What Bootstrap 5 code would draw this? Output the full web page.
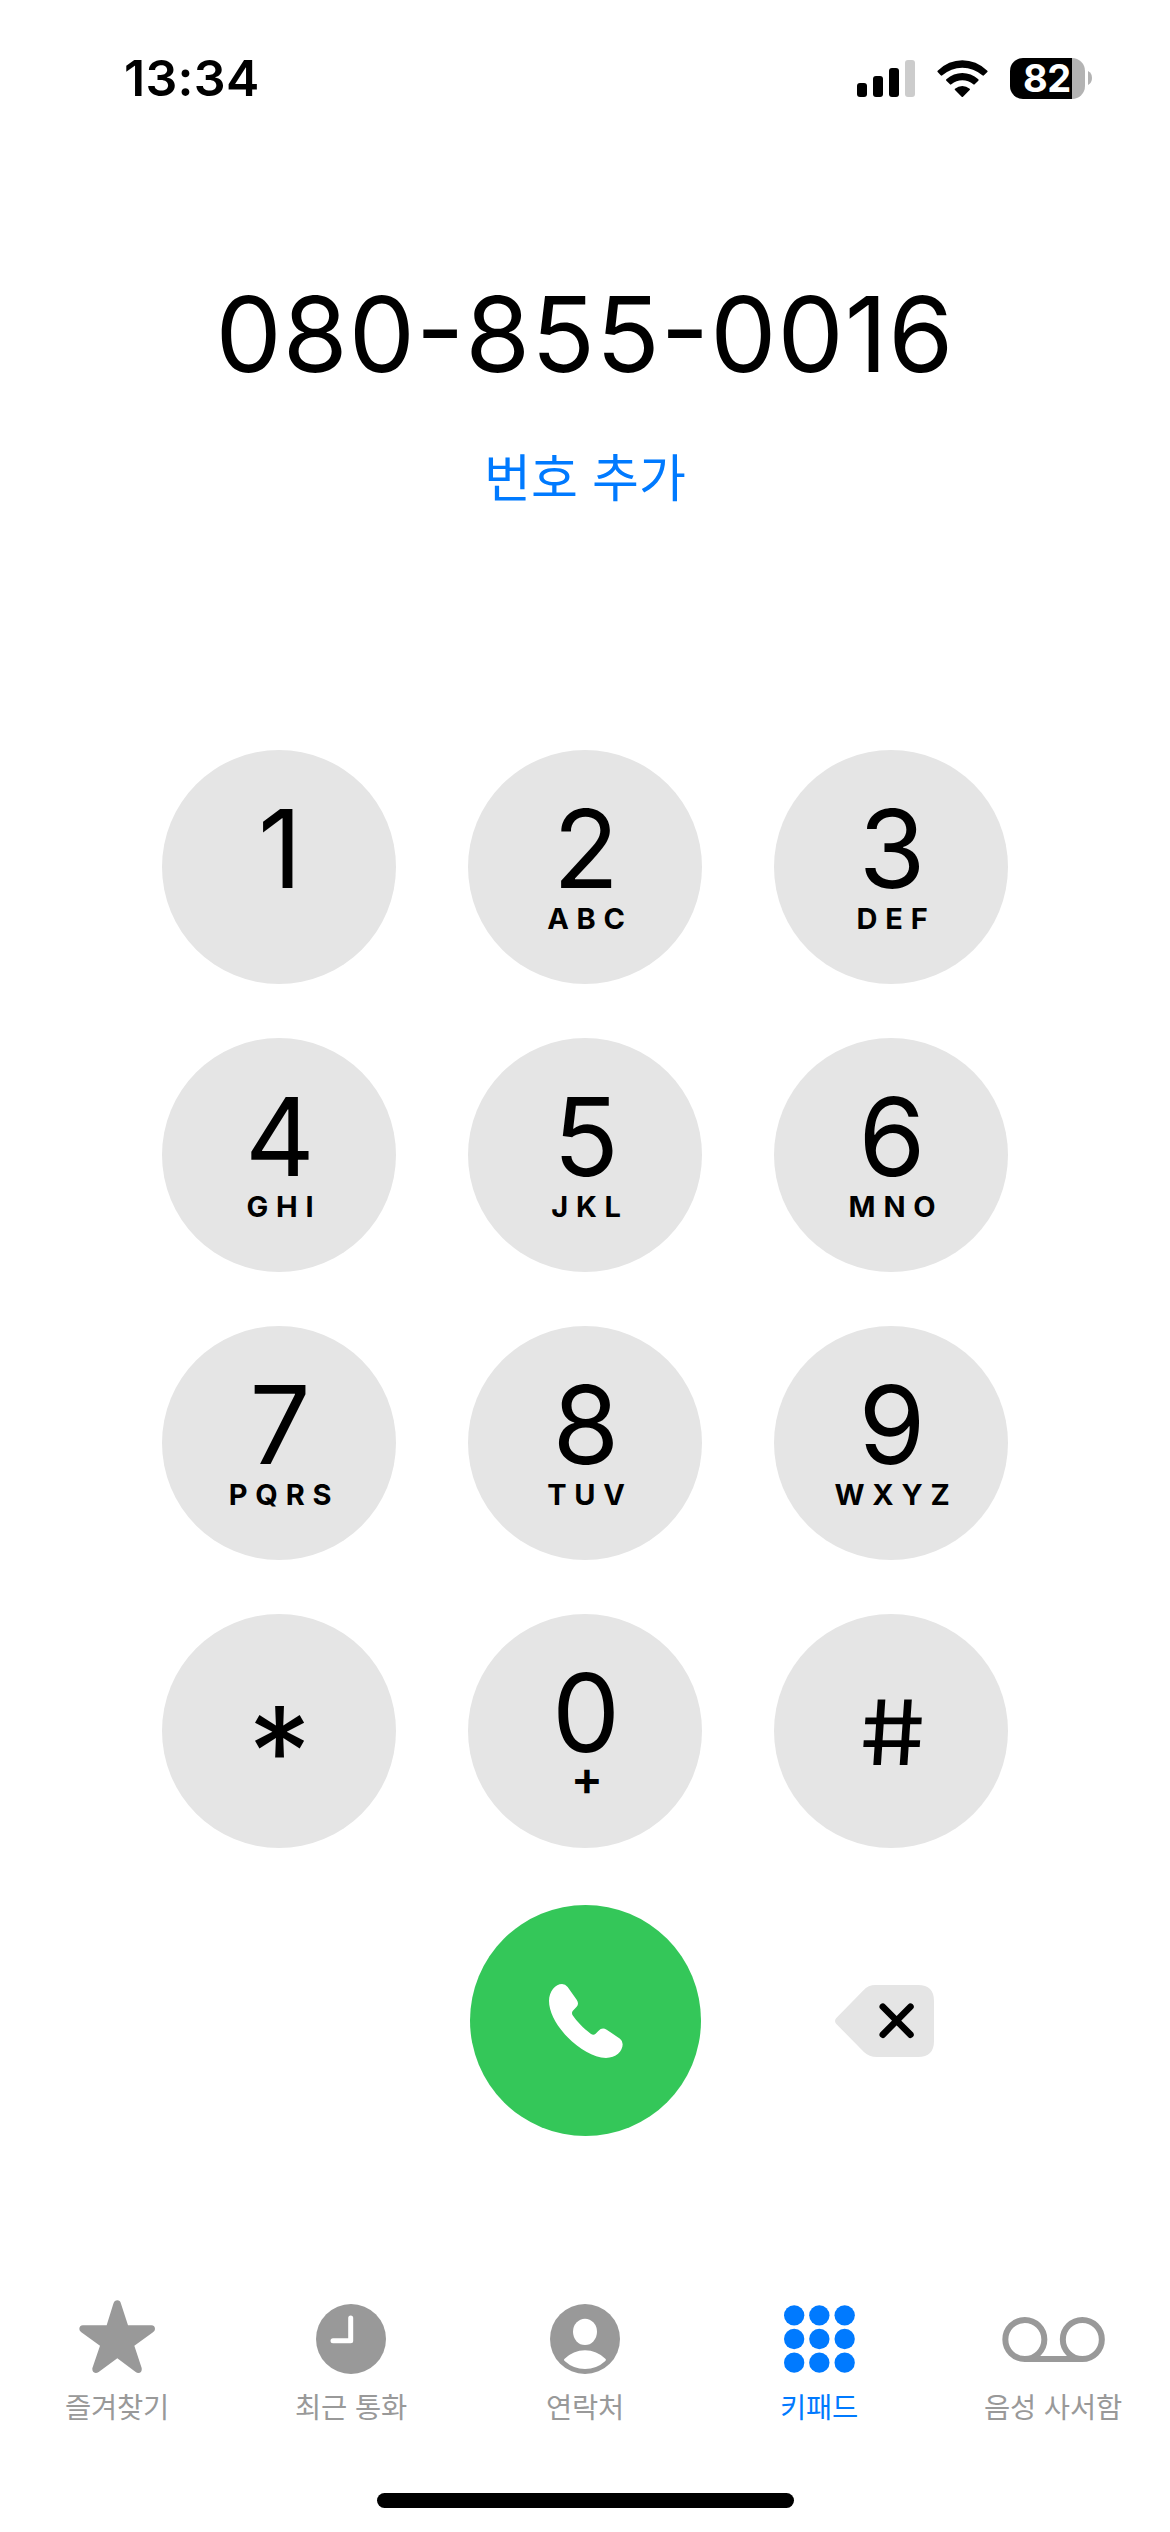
<!DOCTYPE html>
<html lang="ko">
<head>
<meta charset="utf-8">
<meta name="viewport" content="width=device-width, initial-scale=1">
<title>키패드</title>
<link href="https://cdn.jsdelivr.net/npm/bootstrap@5.3.0/dist/css/bootstrap.min.css" rel="stylesheet">
<style>
  body { background: #fff; color: #000; font-family: Inter, "Noto Sans CJK KR", sans-serif; }
  svg { display: block; flex: none; }
  button { border: 0; padding: 0; background: none; color: inherit; }
  .phone { width: 1170px; height: 2532px; overflow: hidden; }
  .status-bar { height: 156px; padding: 0 78px 0 124px; }
  .clock-text { font-size: 50px; font-weight: 600; line-height: 156px; letter-spacing: .3px; }
  .status-icons { gap: 22px; }
  .battery { width: 75px; height: 41px; border-radius: 13px; background: linear-gradient(90deg, #000 62px, #b3b3b3 62px); color: #fff; font-size: 38px; font-weight: 700; line-height: 41px; padding-left: 13px; letter-spacing: -.5px; }
  .dialed { height: 594px; padding-top: 118px; }
  .dialed-number { font-size: 105px; line-height: 120px; letter-spacing: 1px; font-feature-settings: "case"; }
  .add-number { font-family: "Noto Sans CJK KR", sans-serif; font-size: 51px; line-height: 74px; color: #007aff; margin-top: 44px; }
  .keypad { display: grid; grid-template-columns: repeat(3, 234px); grid-auto-rows: 234px; gap: 54px 72px; }
  .key { background: #e5e5e5; border-radius: 50%; padding-top: 45px; }
  .key-digit { font-size: 108px; line-height: 108px; margin-right: -2px; }
  .key-letters { font-size: 29px; line-height: 30px; font-weight: 700; letter-spacing: 7.8px; margin: 1px -10px 0 0; }
  .key-star { font-size: 126px; line-height: 186px; margin-right: -1px; }
  .key-hash { font-size: 90px; line-height: 147px; transform: scaleX(1.15) skewX(6deg); margin-right: -3px; }
  .key-plus { font-size: 48px; line-height: 40px; font-weight: 600; margin: -9px 0 0 4px; }
  .call-btn { width: 231px; height: 231px; margin-top: 3px; }
  .delete-btn { padding: 4px 0 0 61px; }
  .tab-bar { height: 199px; }
  .tab-item { width: 234px; color: #999; font-family: "Noto Sans CJK KR", sans-serif; font-size: 28.500px; line-height: 43px; letter-spacing: -.2px; }
  .tab-item.active { color: #007aff; }
  .tab-icon { height: 90px; }
  .star-icon { margin-bottom: 5px; }
  .home-bar { width: 417px; height: 15px; border-radius: 8px; background: #000; }
</style>
<script src="https://cdn.jsdelivr.net/npm/bootstrap@5.3.0/dist/js/bootstrap.bundle.min.js"></script>
</head>
<body>
<div class="phone d-flex flex-column align-items-center">
  <header class="status-bar w-100 d-flex align-items-center justify-content-between">
    <div class="clock-text">13:34</div>
    <div class="status-icons d-flex align-items-center">
      <svg width="58" height="37" viewBox="0 0 58 37"><rect y="23" width="10" height="14" rx="3"/><rect x="16" y="16" width="10" height="21" rx="3"/><rect x="32" y="8" width="10" height="29" rx="3"/><rect x="48" width="10" height="37" rx="3" fill="#ccc"/></svg>
      <svg width="51" height="37" viewBox="318 56 153 111"><path d="M320 88Q353 57 394 57T469 88Q471 90 469 92L459 102Q457 104 454 102Q428 79 394 79T334 102Q332 104 329 102L320 92Q318 90 320 88Z"/><path d="M346 114Q368 95 394 95T442 114Q444 116 442 118L431 129Q429 131 427 129Q412 117 394 117T361 129Q359 131 357 129L346 118Q344 116 346 114Z"/><path d="M372 142Q382 134 394 134T416 142Q418 144 416 146L396 166Q394 168 392 166L372 146Q370 144 372 142Z"/></svg>
      <div class="d-flex align-items-center">
        <div class="battery">82</div>
        <svg width="7" height="14" viewBox="0 0 7 14"><path d="M3 0Q7 2 7 7T3 14Z" fill="#b3b3b3"/></svg>
      </div>
    </div>
  </header>

  <section class="dialed d-flex flex-column align-items-center">
    <div class="dialed-number">080-855-0016</div>
    <button class="add-number">번호 추가</button>
  </section>

  <main class="keypad text-center">
    <div class="key"><div class="key-digit">1</div></div>
    <div class="key"><div class="key-digit">2</div><div class="key-letters">ABC</div></div>
    <div class="key"><div class="key-digit">3</div><div class="key-letters">DEF</div></div>
    <div class="key"><div class="key-digit">4</div><div class="key-letters">GHI</div></div>
    <div class="key"><div class="key-digit">5</div><div class="key-letters">JKL</div></div>
    <div class="key"><div class="key-digit">6</div><div class="key-letters">MNO</div></div>
    <div class="key"><div class="key-digit">7</div><div class="key-letters">PQRS</div></div>
    <div class="key"><div class="key-digit">8</div><div class="key-letters">TUV</div></div>
    <div class="key"><div class="key-digit">9</div><div class="key-letters">WXYZ</div></div>
    <div class="key"><div class="key-star">*</div></div>
    <div class="key"><div class="key-digit">0</div><div class="key-plus">+</div></div>
    <div class="key"><div class="key-hash">#</div></div>
    <div></div>
    <button class="call-btn mx-auto rounded-circle" aria-label="통화">
      <svg width="231" height="231" viewBox="30 45 693 693"><circle cx="376.500" cy="391.500" r="346.500" fill="#34c759"/><path fill="#fff" d="M267 333C267 304 287 282 306 282Q316 282 323 291L350 329Q358 341 350 350L338 363Q334 368 338 376C350 394 371 416 392 431Q400 437 406 432L415 423Q426 411 440 419L480 446Q488 452 488 463C488 484 468 504 438 504C400 504 357 476 323 442C289 407 267 366 267 333Z"/></svg>
    </button>
    <button class="delete-btn d-flex align-items-center" aria-label="삭제">
      <svg width="99" height="72" viewBox="1124 285 298 216"><path fill="#e5e5e5" d="M1128 384L1209 301Q1224 285 1246 285H1374Q1422 285 1422 333V453Q1422 501 1374 501H1250Q1227 501 1211 486L1128 402Q1120 393 1128 384Z"/><path d="M1268 350L1351 434M1351 350L1268 434" stroke="#000" stroke-width="20" stroke-linecap="round"/></svg>
    </button>
  </main>

  <nav class="tab-bar w-100 d-flex mt-auto text-center">
    <div class="tab-item"><div class="tab-icon d-flex align-items-center justify-content-center">
      <svg class="star-icon" width="76" height="73" viewBox="114 59 228 219"><path fill="#999" d="M217 70Q221 60 229 60T240 70L261 135H331Q342 136 342 146Q342 151 336 156L280 196L302 263Q304 277 292 278Q288 278 284 275L229 234L173 275Q169 278 164 278Q153 276 154 264L177 196L121 156Q115 151 115 146Q115 136 126 135H197Z"/></svg>
    </div>즐겨찾기</div>
    <div class="tab-item"><div class="tab-icon d-flex align-items-center justify-content-center">
      <svg width="70" height="70" viewBox="0 0 70 70"><circle cx="35" cy="35" r="35" fill="#999"/><path d="M34.700 14V36.700H17" fill="none" stroke="#fff" stroke-width="5" stroke-linecap="round" stroke-linejoin="round"/></svg>
    </div>최근 통화</div>
    <div class="tab-item"><div class="tab-icon d-flex align-items-center justify-content-center">
      <svg width="70" height="70" viewBox="150 72 210 210"><circle cx="255" cy="177" r="105" fill="#999"/><ellipse cx="255" cy="155.500" rx="36" ry="39.500" fill="#fff"/><path fill="#fff" d="M193 237Q220 211 255 211T317 237Q319 240 316 243Q290 267 255 267T194 243Q190 240 193 237Z"/></svg>
    </div>연락처</div>
    <div class="tab-item active"><div class="tab-icon d-flex align-items-center justify-content-center">
      <svg width="71" height="68" viewBox="849 75 213 204" fill="#007aff"><circle cx="879.500" cy="106" r="30.500"/><circle cx="955" cy="106" r="30.500"/><circle cx="1031" cy="106" r="30.500"/><circle cx="879.500" cy="177" r="30.500"/><circle cx="955" cy="177" r="30.500"/><circle cx="1031" cy="177" r="30.500"/><circle cx="879.500" cy="248" r="30.500"/><circle cx="955" cy="248" r="30.500"/><circle cx="1031" cy="248" r="30.500"/></svg>
    </div>키패드</div>
    <div class="tab-item"><div class="tab-icon d-flex align-items-center justify-content-center">
      <svg width="103" height="45" viewBox="122 111 309 135" fill="none" stroke="#999" stroke-width="18"><circle cx="190.500" cy="178.500" r="58.500"/><circle cx="363" cy="178.500" r="58.500"/><path d="M190 237H363"/></svg>
    </div>음성 사서함</div>
  </nav>
  <div class="home-bar mb-4"></div>
</div>
</body>
</html>
